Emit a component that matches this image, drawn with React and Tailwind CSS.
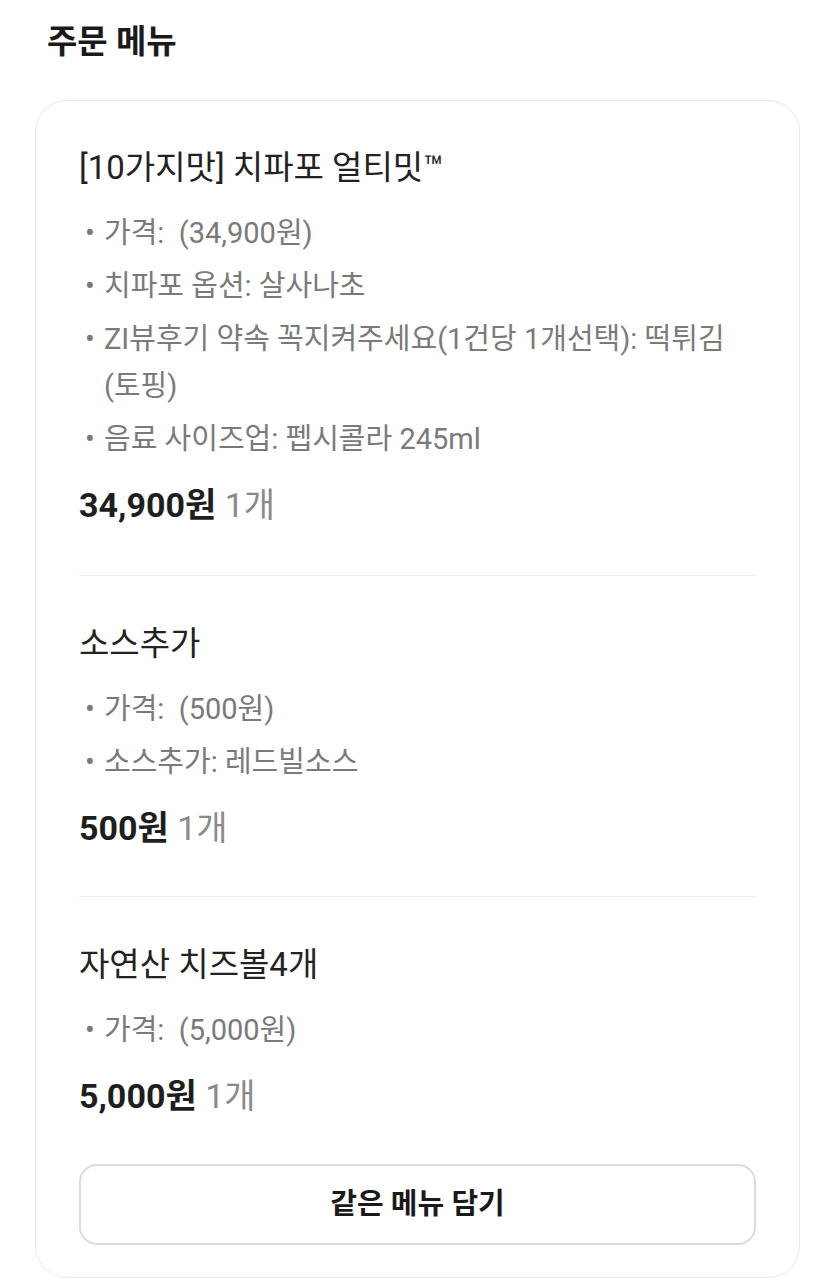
import React from "react";

const items = [
  {
    title: "[10가지맛] 치파포 얼티밋™",
    options: [
      "가격:\u00a0 (34,900원)",
      "치파포 옵션: 살사나초",
      "ZI뷰후기 약속 꼭지켜주세요(1건당 1개선택): 떡튀김 (토핑)",
      "음료 사이즈업: 펩시콜라 245ml",
    ],
    price: "34,900원",
    qty: "1개",
  },
  {
    title: "소스추가",
    options: ["가격:\u00a0 (500원)", "소스추가: 레드빌소스"],
    price: "500원",
    qty: "1개",
  },
  {
    title: "자연산 치즈볼4개",
    options: ["가격:\u00a0 (5,000원)"],
    price: "5,000원",
    qty: "1개",
  },
];

function Item({ item, first, last }) {
  return (
    <div
      className={
        (first ? "pt-[47px] pb-[50px] " : "pt-[48px] pb-[48px] ") +
        (last ? "" : "border-b border-[#efefef]")
      }
    >
      <div className="text-[33px] leading-[40px] text-[#222222]">{item.title}</div>
      <div className="mt-[22px] flex flex-col gap-[6px]">
        {item.options.map((o, i) => (
          <div key={i} className="flex text-[29px] leading-[47px] text-[#7a7a7a]">
            <span className="w-[25px] shrink-0 pl-[6px]">•</span>
            <span className="flex-1 break-keep">{o}</span>
          </div>
        ))}
      </div>
      <div className="mt-[22px] text-[34px] leading-[40px]">
        <span className="font-bold text-[#1e1e1e]">{item.price}</span>{" "}
        <span className="text-[#8a8a8a]">{item.qty}</span>
      </div>
    </div>
  );
}

export default function App() {
  return (
    <div
      className="min-h-screen bg-white px-[35px] pt-[22px]"
      style={{ fontFamily: "Roboto, 'Noto Sans CJK KR', 'Noto Sans', sans-serif" }}
    >
      <div className="pl-[12px] text-[33px] font-bold leading-[40px] text-[#1a1a1a]">주문 메뉴</div>
      <div className="mt-[38px] rounded-[32px] border border-[#e8e8e8] px-[43px] pb-[32px]">
        {items.map((it, i) => (
          <Item key={i} item={it} first={i === 0} last={i === items.length - 1} />
        ))}
        <button className="flex h-[81px] w-full items-center justify-center rounded-[18px] border-2 border-[#dcdcdc] bg-white text-[29px] font-bold text-[#1a1a1a]">
          같은 메뉴 담기
        </button>
      </div>
    </div>
  );
}
